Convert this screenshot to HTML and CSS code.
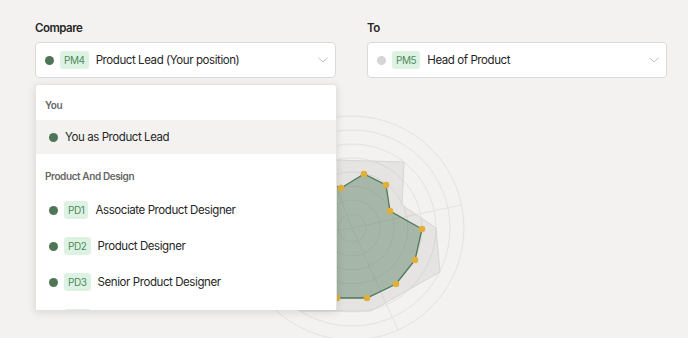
FILE: index.html
```html
<!DOCTYPE html>
<html>
<head>
<meta charset="utf-8">
<link rel="stylesheet" href="styles.css">
</head>
<body>
<div class="page">
  <div class="fields">
    <div class="field">
      <div class="label">Compare</div>
      <div class="select">
        <span class="dot dot-green"></span>
        <span class="badge">PM4</span>
        <span class="select-text">Product Lead (Your position)</span>
        <svg class="chev" width="10" height="6" viewBox="0 0 10 6"><path d="M0.5 0.8 L5 5 L9.5 0.8" fill="none" stroke="#c2c0be" stroke-width="1"/></svg>
      </div>
      <div class="menu">
        <div class="group-title first">You</div>
        <div class="item selected">
          <span class="dot dot-green"></span>
          <span class="item-text">You as Product Lead</span>
        </div>
        <div class="group-title">Product And Design</div>
        <div class="item badge-item">
          <span class="dot dot-green"></span>
          <span class="badge">PD1</span>
          <span class="item-text">Associate Product Designer</span>
        </div>
        <div class="item badge-item">
          <span class="dot dot-green"></span>
          <span class="badge">PD2</span>
          <span class="item-text">Product Designer</span>
        </div>
        <div class="item badge-item">
          <span class="dot dot-green"></span>
          <span class="badge">PD3</span>
          <span class="item-text">Senior Product Designer</span>
        </div>
        <div class="item badge-item">
          <span class="dot dot-green"></span>
          <span class="badge">PD4</span>
          <span class="item-text">Lead Product Designer</span>
        </div>
      </div>
    </div>
    <div class="field">
      <div class="label">To</div>
      <div class="select">
        <span class="dot dot-grey"></span>
        <span class="badge">PM5</span>
        <span class="select-text">Head of Product</span>
        <svg class="chev" width="10" height="6" viewBox="0 0 10 6"><path d="M0.5 0.8 L5 5 L9.5 0.8" fill="none" stroke="#c2c0be" stroke-width="1"/></svg>
      </div>
    </div>
  </div>
  <div class="chart">
    <svg width="240" height="240" viewBox="0 0 240 240">
      <g fill="none" stroke="#e4e2e0" stroke-width="1">
        <circle cx="120" cy="120" r="14"/>
        <circle cx="120" cy="120" r="28"/>
        <circle cx="120" cy="120" r="42"/>
        <circle cx="120" cy="120" r="56"/>
        <circle cx="120" cy="120" r="70"/>
        <circle cx="120" cy="120" r="84"/>
        <circle cx="120" cy="120" r="98"/>
        <circle cx="120" cy="120" r="112"/>
        <line x1="120" y1="120" x2="229" y2="97"/>
        <line x1="120" y1="120" x2="166" y2="222"/>
        <line x1="120" y1="120" x2="10" y2="140"/>
        <line x1="120" y1="120" x2="80" y2="15"/>
      </g>
      <polygon points="104,52 172,54 170,97 204,120 208,164 139,203 68,203 28,162 23,112 43,62" fill="rgba(60,50,50,0.07)" stroke="#d8d5d4" stroke-width="1"/>
      <polygon points="109,80 132,66 154,77 158,103 190,121 183,152 164,176 135,190 105,190 68,188 48,152 43,117 63,87 86,72" fill="rgba(78,122,88,0.42)" stroke="#4e7a58" stroke-width="1.3"/>
      <g fill="#e0b03a">
        <circle cx="109" cy="80" r="3.3"/>
        <circle cx="132" cy="66" r="3.3"/>
        <circle cx="154" cy="77" r="3.3"/>
        <circle cx="158" cy="103" r="3.3"/>
        <circle cx="190" cy="121" r="3.3"/>
        <circle cx="183" cy="152" r="3.3"/>
        <circle cx="164" cy="176" r="3.3"/>
        <circle cx="135" cy="190" r="3.3"/>
        <circle cx="105" cy="190" r="3.3"/>
        <circle cx="68" cy="188" r="3.3"/>
        <circle cx="48" cy="152" r="3.3"/>
        <circle cx="43" cy="117" r="3.3"/>
        <circle cx="63" cy="87" r="3.3"/>
        <circle cx="86" cy="72" r="3.3"/>
      </g>
    </svg>
  </div>
</div>
</body>
</html>
```

FILE: styles.css
```css
* { box-sizing: border-box; }
html, body {
  margin: 0;
  padding: 0;
  background: #f3f2f0;
  font-family: Inter, "Noto Sans", sans-serif;
  color: #2b2b2b;
  overflow: hidden;
}
.page {
  width: 688px;
  height: 338px;
  padding: 21px 21px 0 35px;
}
.fields {
  display: grid;
  grid-template-columns: 301px 300px;
  column-gap: 31px;
  position: relative;
  z-index: 2;
}
.field {
  position: relative;
}
.label {
  font-size: 11.5px;
  font-weight: 600;
  letter-spacing: -0.5px;
  line-height: 14px;
  color: #262626;
}
.select {
  margin-top: 7px;
  height: 36px;
  background: #fff;
  border: 1px solid #dcdad8;
  border-radius: 4px;
  display: flex;
  align-items: center;
  padding: 0 7px 0 9px;
}
.dot {
  width: 9px;
  height: 9px;
  border-radius: 50%;
  flex: none;
}
.dot-green { background: #4e7656; }
.dot-grey { background: #d5d5d5; }
.badge {
  margin-left: 6px;
  height: 18px;
  padding: 0 4px;
  border-radius: 3px;
  background: #ddf2e3;
  color: #4f8a5b;
  font-size: 10px;
  letter-spacing: -0.4px;
  line-height: 18px;
  flex: none;
}
.select-text {
  margin-left: 7px;
  font-size: 11.5px;
  letter-spacing: -0.42px;
  color: #262626;
  flex: 1;
  white-space: nowrap;
}
.chev { flex: none; }
.menu {
  position: absolute;
  left: 0;
  top: 63px;
  width: 302px;
  height: 226px;
  overflow: hidden;
  background: #fff;
  border: 1px solid #e6e4e2;
  border-bottom: none;
  border-radius: 4px 4px 0 0;
  box-shadow: 0 2px 8px rgba(0,0,0,0.12);
}
.group-title {
  padding: 14px 9px 8px;
  font-size: 10px;
  font-weight: 600;
  letter-spacing: -0.4px;
  line-height: 16px;
  color: #666;
}
.group-title.first { padding-top: 12px; padding-bottom: 7px; }
.item {
  display: flex;
  align-items: center;
  padding: 0 13px;
  height: 36px;
}
.item.selected {
  height: 34px;
  background: #f3f2f0;
}
.item-text {
  margin-left: 7px;
  font-size: 11.5px;
  letter-spacing: -0.42px;
  color: #262626;
  white-space: nowrap;
}
.chart {
  display: flex;
  justify-content: center;
  margin-top: 30px;
  position: relative;
  z-index: 1;
}
.chart svg { display: block; margin-left: 2px; }
```
